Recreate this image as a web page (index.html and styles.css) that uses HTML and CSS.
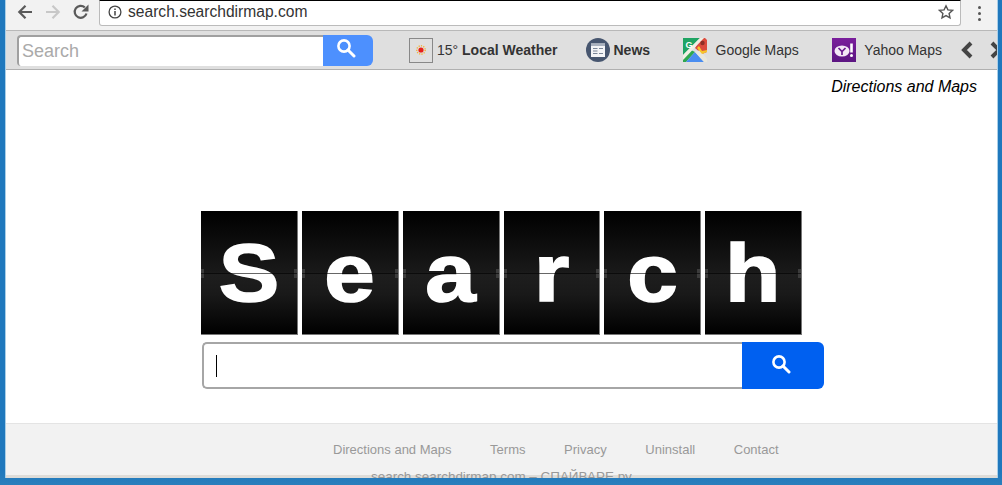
FILE: index.html
```html
<!DOCTYPE html>
<html lang="en">
<head>
    <meta charset="UTF-8">
    <meta name="viewport" content="width=device-width, initial-scale=1.0">
    <title>Search</title>
    <link rel="stylesheet" href="styles.css">
</head>
<body>
    <div class="window">
        <div class="browser-bar">
            <svg class="nav-icon" viewBox="0 0 16 16"><path d="M15 8H3M8.5 1.8L2.3 8l6.2 6.2" fill="none" stroke="#5a5a5a" stroke-width="2.2"/></svg>
            <svg class="nav-icon" viewBox="0 0 16 16"><path d="M1 8h12M7.5 1.8L13.7 8l-6.2 6.2" fill="none" stroke="#c8c8c8" stroke-width="2.2"/></svg>
            <svg class="nav-icon" viewBox="0 0 16 16"><path d="M13.5 9.5A6 6 0 1 1 11.8 3.4" fill="none" stroke="#5a5a5a" stroke-width="2.2"/><path d="M15.5 .5v7h-7z" fill="#5a5a5a"/></svg>
            <div class="address">
                <svg class="info-icon" viewBox="0 0 14 14"><circle cx="7" cy="7" r="5.9" fill="none" stroke="#444" stroke-width="1.3"/><path d="M7 6v4.4M7 3.4v1.5" stroke="#444" stroke-width="1.5"/></svg>
                <span class="url">search.searchdirmap.com</span>
                <svg class="star-icon" viewBox="0 0 16 16"><path d="M8 1.8l1.9 4.1 4.5.5-3.3 3 .9 4.4L8 11.6l-4 2.2.9-4.4-3.3-3 4.5-.5z" fill="none" stroke="#555" stroke-width="1.4"/></svg>
            </div>
            <div class="menu-dots"><i></i><i></i><i></i></div>
        </div>

        <div class="toolbar">
            <form class="tb-search">
                <input type="text" placeholder="Search">
                <button type="button">
                    <svg viewBox="0 0 20 20"><circle cx="8" cy="8" r="5.6" fill="none" stroke="#fff" stroke-width="2.6"/><path d="M12 12l6 6" stroke="#fff" stroke-width="3" stroke-linecap="round"/></svg>
                </button>
            </form>
            <div class="tb-item weather">
                <span class="weather-icon"><svg viewBox="0 0 12 12"><circle cx="6" cy="6" r="2.6" fill="#e8201a"/><circle cx="6" cy="6" r="4.2" fill="none" stroke="#f3b23a" stroke-width="1.4" stroke-dasharray="1.2 1.2"/></svg></span>
                <span>15° <b>Local Weather</b></span>
            </div>
            <div class="tb-item news">
                <svg class="tb-icon" viewBox="0 0 24 24"><circle cx="12" cy="12" r="12" fill="#47566f"/><rect x="5" y="5.5" width="14" height="13.5" fill="#f4f5f7"/><rect x="5" y="5.5" width="14" height="2.5" fill="#aab2bf"/><path d="M7 10.5h4.5M7 13h4.5M7 15.5h4.5M13 10.5h4M13 15.5h4" stroke="#7a8698" stroke-width="1.2"/></svg>
                <b>News</b>
            </div>
            <div class="tb-item gmaps">
                <svg class="tb-icon" viewBox="0 0 24 24"><path d="M0 0h17L0 17z" fill="#1fa463"/><path d="M0 17v7h3l9-10-4-2z" fill="#2fa84f"/><path d="M17 0h5l2 2v12l-5 2-7-6z" fill="#dc4b3e"/><path d="M17 0L0 17v5L21 0z" fill="#f1efe4"/><path d="M3 24l9-10 9 10z" fill="#4a8df0"/><path d="M12 14l5-2 7 9v3h-3z" fill="#e9e7dc"/><path d="M14 10l5 6 5-2v-2l-5 1-3-5z" fill="#f6c52c"/><circle cx="19.5" cy="5" r="2.2" fill="#8e2f27"/><text x="2.5" y="10" class="g-letter">G</text></svg>
                <span>Google Maps</span>
            </div>
            <div class="tb-item yahoo">
                <svg class="tb-icon" viewBox="0 0 24 24"><defs><linearGradient id="yahoo-bg" x1="0" y1="0" x2="0" y2="1"><stop offset="0" stop-color="#7a1f9c"/><stop offset="1" stop-color="#5c1682"/></linearGradient></defs><rect width="24" height="24" fill="url(#yahoo-bg)"/><ellipse cx="10" cy="13" rx="7.5" ry="5.5" fill="#f3e8f6"/><path d="M6.5 10l3.5 3.5L13.5 10M10 13.5V17" stroke="#6a1b8f" stroke-width="1.7" fill="none"/><path d="M19.5 5.5v9" stroke="#fff" stroke-width="2.6"/><circle cx="19.5" cy="17.5" r="1.5" fill="#fff"/></svg>
                <span>Yahoo Maps</span>
            </div>
            <svg class="chevron prev" viewBox="0 0 14 18"><path d="M11 2L4 9l7 7" fill="none" stroke="#444" stroke-width="4"/></svg>
            <svg class="chevron next" viewBox="0 0 14 18"><path d="M3 2l7 7-7 7" fill="none" stroke="#444" stroke-width="4"/></svg>
        </div>

        <div class="page">
            <div class="top-link">Directions and Maps</div>
            <div class="hero">
                <div class="logo">
                    <div class="tile"><span>S</span></div>
                    <div class="tile"><span>e</span></div>
                    <div class="tile"><span>a</span></div>
                    <div class="tile"><span>r</span></div>
                    <div class="tile"><span>c</span></div>
                    <div class="tile"><span>h</span></div>
                </div>
                <div class="main-search">
                    <div class="main-input"><i class="caret"></i></div>
                    <div class="main-btn">
                        <svg viewBox="0 0 20 20"><circle cx="8" cy="8" r="5.6" fill="none" stroke="#fff" stroke-width="2.6"/><path d="M12 12l6 6" stroke="#fff" stroke-width="3" stroke-linecap="round"/></svg>
                    </div>
                </div>
            </div>
            <div class="footer">
                <a>Directions and Maps</a>
                <a>Terms</a>
                <a>Privacy</a>
                <a>Uninstall</a>
                <a>Contact</a>
            </div>
            <div class="strip"></div>
            <div class="watermark">search.searchdirmap.com – СПАЙВАРЕ.ру</div>
        </div>
    </div>
</body>
</html>
```

FILE: styles.css
```css
html, body {
    margin: 0;
    padding: 0;
    height: 485px;
    overflow: hidden;
}
body {
    font-family: "Liberation Sans", Arial, sans-serif;
    background: linear-gradient(#1f78bd 0%, #1f78bd 97%, #2a7fbc 100%);
    color: #333;
}
.window {
    margin: 0 5px 0 6px;
    height: 478px;
    display: flex;
    flex-direction: column;
    background-color: #fff;
    box-shadow: -1px 0 0 #a9cfe8, 1px 0 0 #a9cfe8;
}

/* browser chrome */
.browser-bar {
    height: 30px;
    flex: none;
    display: flex;
    align-items: flex-start;
    background-color: #f2f2f2;
    padding-left: 11px;
    box-sizing: border-box;
}
.nav-icon {
    width: 16px;
    height: 16px;
    margin: 4px 12px 0 0;
    flex: none;
}
.nav-icon:nth-child(3) {
    margin-right: 10px;
}
.address {
    width: 862px;
    height: 26px;
    box-sizing: border-box;
    background-color: #fff;
    border: 1px solid #bbb;
    border-top: 1px solid #000;
    border-radius: 0 0 3px 3px;
    display: flex;
    align-items: center;
    padding: 0 6px 2px 8px;
}
.info-icon {
    width: 14px;
    height: 14px;
    margin-right: 6px;
}
.url {
    font-size: 15.6px;
    flex: 1;
}
.star-icon {
    width: 16px;
    height: 16px;
}
.menu-dots {
    margin: 6px 0 0 17px;
    display: flex;
    flex-direction: column;
    gap: 3px;
}
.menu-dots i {
    display: block;
    width: 3px;
    height: 3px;
    border-radius: 50%;
    background-color: #555;
}

/* toolbar */
.toolbar {
    height: 40px;
    flex: none;
    box-sizing: border-box;
    display: flex;
    align-items: center;
    padding-left: 11px;
    background-color: #dfdfdf;
    border-top: 1px solid #b8b8b8;
    border-bottom: 1px solid #b0b0b0;
    overflow: hidden;
    font-size: 14px;
}
.tb-search {
    display: flex;
    width: 356px;
    height: 31px;
    margin: 0 36px 0 0;
    flex: none;
}
.tb-search input {
    width: 306px;
    height: 31px;
    box-sizing: border-box;
    border: 0;
    border-top: 2px solid #a0a0a0;
    border-left: 2px solid #a0a0a0;
    border-radius: 4px 0 0 4px;
    padding: 1px 0 0 3px;
    font: 18px "Liberation Sans", Arial, sans-serif;
    background-color: #fff;
    outline: none;
}
.tb-search input::placeholder {
    color: #aaa;
}
.tb-search button {
    width: 50px;
    height: 31px;
    border: 0;
    padding: 0;
    background-color: #4d90fe;
    border-radius: 0 6px 6px 0;
    display: flex;
    align-items: center;
    justify-content: center;
}
.tb-search svg {
    width: 20px;
    height: 20px;
    margin: -4px 4px 0 0;
}
.tb-item {
    display: flex;
    align-items: center;
    flex: none;
    white-space: nowrap;
}
.tb-icon {
    width: 24px;
    height: 24px;
    margin-right: 8.5px;
    flex: none;
}
.weather {
    margin-right: 28px;
}
.weather-icon {
    width: 24px;
    height: 25px;
    box-sizing: border-box;
    border: 1px solid #888;
    margin-right: 4px;
    display: flex;
    align-items: center;
    justify-content: center;
}
.weather-icon svg {
    width: 12px;
    height: 12px;
}
.news {
    margin-right: 33px;
}
.news .tb-icon {
    margin-right: 4px;
}
.gmaps {
    margin-right: 33px;
}
.g-letter {
    font: bold 9px "Liberation Sans", Arial, sans-serif;
    fill: #fff;
}
.chevron {
    width: 14px;
    height: 18px;
    flex: none;
}
.prev {
    margin-left: 18.5px;
}
.next {
    margin-left: 15px;
}

/* page */
.page {
    flex: 1;
    position: relative;
    overflow: hidden;
    display: flex;
    flex-direction: column;
}
.top-link {
    margin-top: 7px;
    padding-right: 20px;
    text-align: right;
    font-size: 16px;
    line-height: 20px;
    font-style: italic;
    color: #000;
}
.hero {
    width: 601px;
    margin: 114px auto 0;
    flex: none;
}
.logo {
    display: grid;
    grid-template-columns: repeat(6, 1fr);
    gap: 4px;
    height: 124px;
}
.tile {
    position: relative;
    display: flex;
    align-items: center;
    justify-content: center;
    overflow: hidden;
    box-sizing: border-box;
    border-right: 1px solid #777;
    border-bottom: 1px solid #777;
    background: linear-gradient(#000 0%, #191919 49%, #1e1e1e 52%, #191919 68%, #000 100%);
    color: #fff;
    font-size: 81px;
    font-weight: bold;
    line-height: 124px;
}
.tile span {
    display: block;
    transform: scaleX(1.12);
    -webkit-text-stroke: 1.6px #fff;
}
.tile::before {
    content: "";
    position: absolute;
    left: 0;
    right: 0;
    top: 58px;
    height: 9px;
    background:
        linear-gradient(#3c3c3c, #3c3c3c) left center / 3px 100% no-repeat,
        linear-gradient(#3c3c3c, #3c3c3c) right center / 3px 100% no-repeat;
}
.tile::after {
    content: "";
    position: absolute;
    left: 0;
    right: 0;
    top: 62px;
    height: 1px;
    background-color: rgba(0, 0, 0, 0.6);
}
.main-search {
    display: flex;
    width: 622px;
    height: 47px;
    margin: 7px 0 0 1px;
}
.main-input {
    width: 540px;
    box-sizing: border-box;
    border: 2px solid #a6a6a6;
    border-right: 0;
    border-radius: 5px 0 0 5px;
    display: flex;
    align-items: center;
    padding-left: 12px;
}
.caret {
    display: block;
    width: 1px;
    height: 22px;
    background-color: #000;
}
.main-btn {
    width: 82px;
    background-color: #0060f0;
    border-radius: 0 6px 6px 0;
    display: flex;
    align-items: center;
    justify-content: center;
}
.main-btn svg {
    width: 20px;
    height: 20px;
    margin: -4px 4px 0 0;
}

/* footer */
.footer {
    margin-top: 34px;
    height: 52px;
    flex: none;
    box-sizing: border-box;
    padding: 0 0 0 327px;
    display: flex;
    align-items: center;
    gap: 38.6px;
    background-color: #f2f2f2;
    border-top: 1px solid #e4e4e4;
    font-size: 13px;
    color: #999;
}
.strip {
    flex: 1;
    background-color: #dedcd8;
}
.watermark {
    position: absolute;
    left: 365px;
    bottom: -7px;
    font-size: 13.45px;
    line-height: 16px;
    color: #999;
    white-space: nowrap;
}
```
